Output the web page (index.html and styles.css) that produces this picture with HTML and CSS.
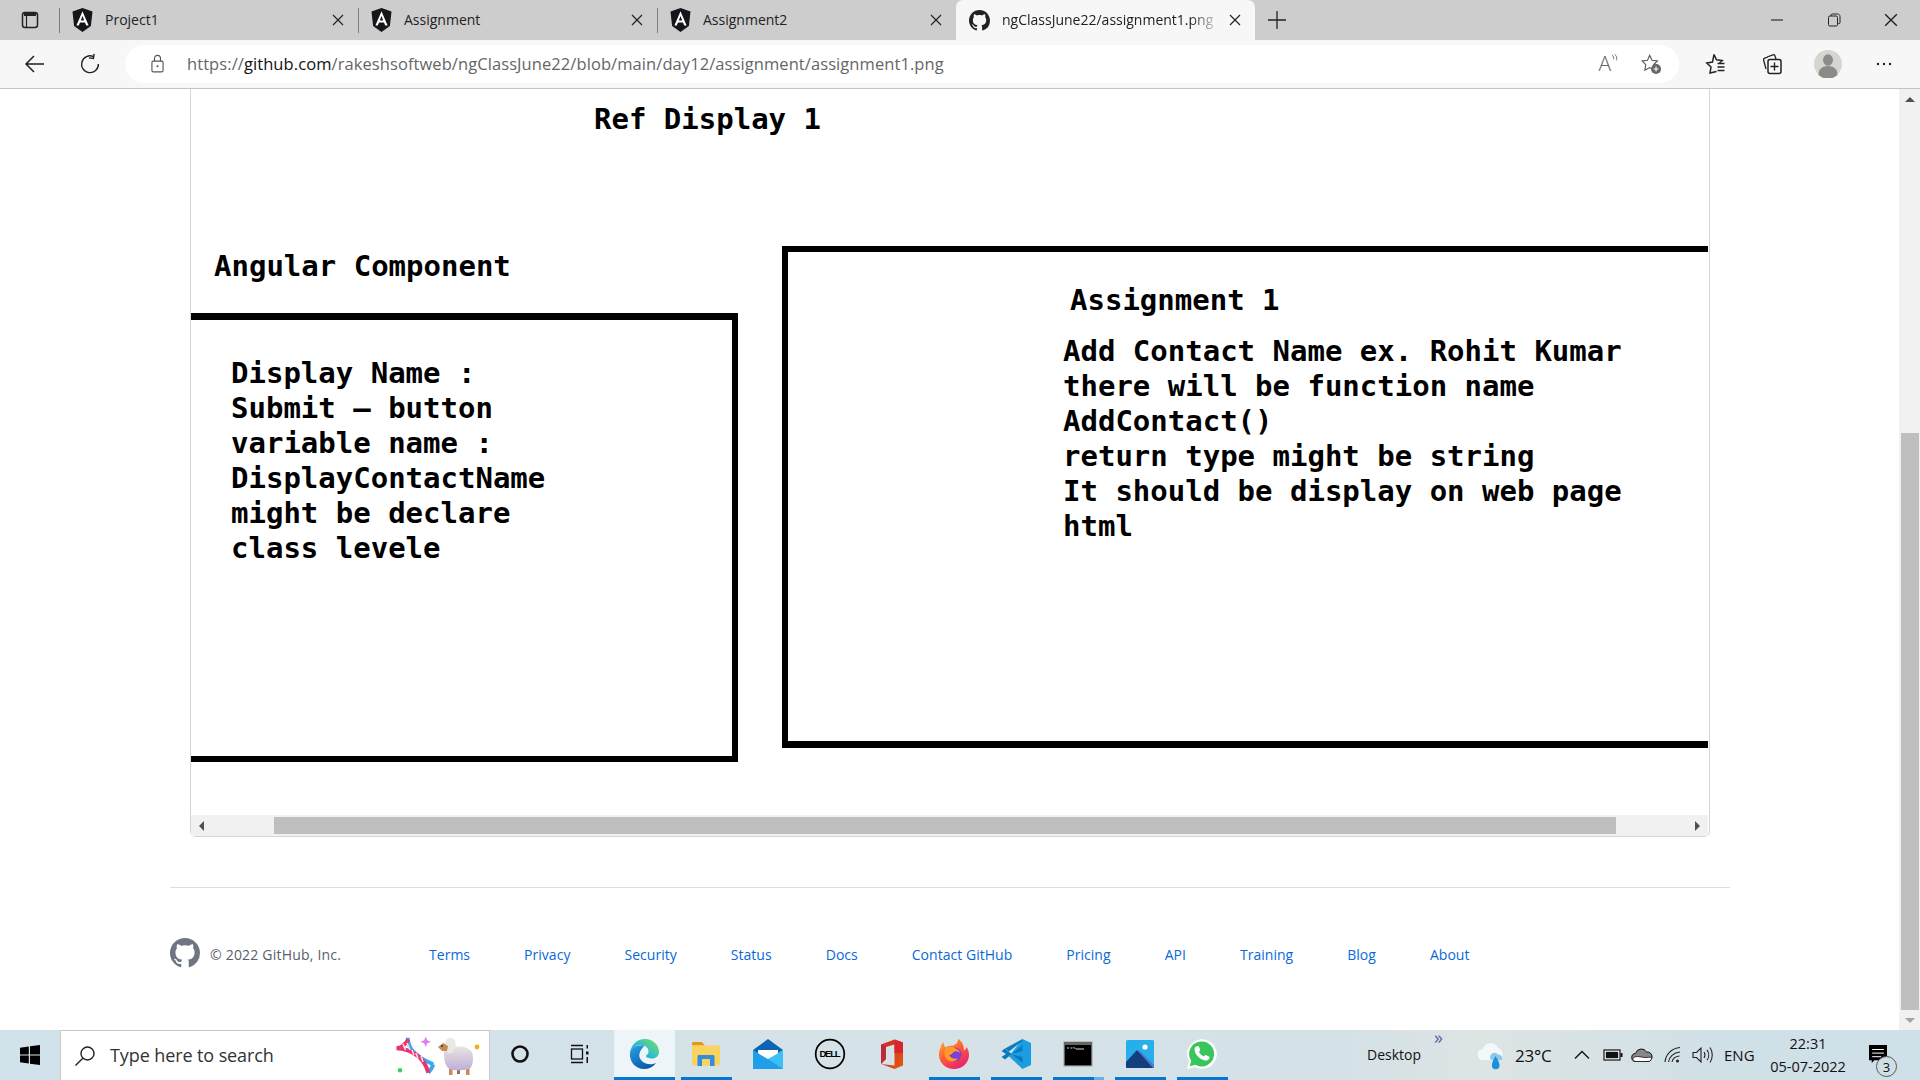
FILE: index.html
```html
<!DOCTYPE html>
<html lang="en">
<head>
<meta charset="utf-8">
<title>ngClassJune22/assignment1.png</title>
<link rel="stylesheet" href="styles.css">
</head>
<body>
<svg class="defs" width="0" height="0" aria-hidden="true">
  <defs>
    <symbol id="angular" viewBox="0 0 20 24">
      <path fill="#15161a" d="M10 0 20 3.6 18.4 18 10 24 1.6 18 0 3.6Z"/>
      <path fill="#fff" fill-rule="evenodd" d="M10 3.2 3.9 17.6h2.4l1.2-3.2h5l1.2 3.2h2.4ZM8.3 12.4 10 8l1.7 4.4Z"/>
    </symbol>
    <symbol id="octo" viewBox="0 0 16 16">
      <path d="M8 0C3.58 0 0 3.58 0 8c0 3.54 2.29 6.53 5.47 7.59.4.07.55-.17.55-.38 0-.19-.01-.82-.01-1.49-2.01.37-2.53-.49-2.69-.94-.09-.23-.48-.94-.82-1.13-.28-.15-.68-.52-.01-.53.63-.01 1.08.58 1.23.82.72 1.21 1.87.87 2.33.66.07-.52.28-.87.51-1.07-1.78-.2-3.64-.89-3.64-3.95 0-.87.31-1.59.82-2.15-.08-.2-.36-1.02.08-2.12 0 0 .67-.21 2.2.82.64-.18 1.32-.27 2-.27.68 0 1.36.09 2 .27 1.53-1.04 2.2-.82 2.2-.82.44 1.1.16 1.92.08 2.12.51.56.82 1.27.82 2.15 0 3.07-1.87 3.75-3.65 3.95.29.25.54.73.54 1.48 0 1.07-.01 1.93-.01 2.2 0 .21.15.46.55.38A8.013 8.013 0 0016 8c0-4.42-3.58-8-8-8z"/>
    </symbol>
    <symbol id="cross" viewBox="0 0 12 12">
      <path d="M1 1l10 10M11 1 1 11" fill="none" stroke="currentColor" stroke-width="1.2"/>
    </symbol>
    <linearGradient id="edgeTop" x1="0" y1="1" x2="1" y2="0.2">
      <stop offset="0" stop-color="#1b8fd8"/><stop offset=".55" stop-color="#33c0c8"/><stop offset="1" stop-color="#6fdc6a"/>
    </linearGradient>
    <linearGradient id="edgeLow" x1="0" y1="0" x2="0.6" y2="1">
      <stop offset="0" stop-color="#2aa3e4"/><stop offset="1" stop-color="#0b5aa8"/>
    </linearGradient>
    <linearGradient id="ffBody" x1="0" y1="0" x2="0.6" y2="1">
      <stop offset="0" stop-color="#ffb02e"/><stop offset=".55" stop-color="#ff5a36"/><stop offset="1" stop-color="#e8246f"/>
    </linearGradient>
    <linearGradient id="officeG" x1="0" y1="0" x2="1" y2="1">
      <stop offset="0" stop-color="#c52a2a"/><stop offset="1" stop-color="#e8590c"/>
    </linearGradient>
    <linearGradient id="sheepG" x1="0" y1="0" x2="0" y2="1">
      <stop offset="0" stop-color="#e8e4e2"/><stop offset="1" stop-color="#bfaed8"/>
    </linearGradient>
  </defs>
</svg>

<div class="browser">
  <header class="tabstrip">
    <div class="sidebtn">
      <svg class="i18" viewBox="0 0 18 18"><rect x="1.5" y="1.5" width="15" height="15" rx="2.5" fill="none" stroke="#222" stroke-width="1.5"/><path d="M3 2h12v3H3Z" fill="#222"/><path d="M5.5 5v11" stroke="#222" stroke-width="1.2"/></svg>
    </div>
    <div class="tab">
      <svg class="favicon"><use href="#angular"/></svg>
      <span class="tabtitle">Project1</span>
      <svg class="tabclose"><use href="#cross"/></svg>
    </div>
    <div class="tab">
      <svg class="favicon"><use href="#angular"/></svg>
      <span class="tabtitle">Assignment</span>
      <svg class="tabclose"><use href="#cross"/></svg>
    </div>
    <div class="tab">
      <svg class="favicon"><use href="#angular"/></svg>
      <span class="tabtitle">Assignment2</span>
      <svg class="tabclose"><use href="#cross"/></svg>
    </div>
    <div class="tab tab-active">
      <svg class="favicon favicon-gh"><use href="#octo"/></svg>
      <span class="tabtitle tabtitle-fade">ngClassJune22/assignment1.png</span>
      <svg class="tabclose"><use href="#cross"/></svg>
    </div>
    <div class="newtab">
      <svg class="i18" viewBox="0 0 18 18"><path d="M9 0v18M0 9h18" stroke="#222" stroke-width="1.3" fill="none"/></svg>
    </div>
    <div class="winctrls">
      <div class="winbtn"><svg class="i14" viewBox="0 0 14 14"><path d="M1 7h12" stroke="#222" stroke-width="1.1"/></svg></div>
      <div class="winbtn"><svg class="i14" viewBox="0 0 14 14"><rect x="1.5" y="3" width="9" height="10" rx="1.5" fill="none" stroke="#222"/><path d="M4 3V2.2C4 1.5 4.5 1 5.2 1h5.3C11.9 1 13 2.1 13 3.5v6c0 .7-.5 1.2-1.2 1.2h-1.3" fill="none" stroke="#222"/></svg></div>
      <div class="winbtn"><svg class="i14"><use href="#cross"/></svg></div>
    </div>
  </header>

  <nav class="toolbar">
    <div class="navbtn navbtn-back">
      <svg class="i22" viewBox="0 0 22 22"><path d="M20 11H2.500M10 3l-8 8 8 8" fill="none" stroke="#222" stroke-width="1.500"/></svg>
    </div>
    <div class="navbtn navbtn-reload">
      <svg class="i22" viewBox="0 0 22 22"><path d="M14.500 3.600A8.400 8.400 0 1 0 19.400 11" fill="none" stroke="#222" stroke-width="1.400"/><path d="M14.800 0.800v4.600h-4.600" fill="none" stroke="#222" stroke-width="1.400" transform="rotate(8 14 3)"/></svg>
    </div>
    <div class="addressbar">
      <svg class="lock" viewBox="0 0 14 20"><rect x="1" y="7.500" width="12" height="11.500" rx="1.500" fill="none" stroke="#555" stroke-width="1.200"/><path d="M3.800 7.500V4.400a3.200 3.200 0 0 1 6.400 0v3.100" fill="none" stroke="#555" stroke-width="1.200"/><circle cx="7" cy="13" r="1.100" fill="#555"/></svg>
      <span class="url">https://<b class="url-host">github.com</b>/rakeshsoftweb/ngClassJune22/blob/main/day12/assignment/assignment1.png</span>
      <span class="readaloud">A<svg class="waves" viewBox="0 0 8 12"><path d="M1 1.500c2 1.200 2.400 3 2 5M4 .5c2.600 1.800 3 4.500 2.200 7" fill="none" stroke="#555" stroke-width=".9"/></svg></span>
      <svg class="favadd" viewBox="0 0 24 24"><path d="M10.500 2.500l2.600 5.400 5.900.8-4.300 4.100 1 5.900-5.200-2.800-5.200 2.800 1-5.900L2.300 8.700l5.900-.8Z" fill="none" stroke="#555" stroke-width="1.200"/><circle cx="17.500" cy="17.500" r="5.500" fill="#666"/><path d="M17.500 14.800v5.400M14.800 17.500h5.400" stroke="#fff" stroke-width="1.200"/></svg>
    </div>
    <div class="toolslot">
      <svg class="i24" viewBox="0 0 24 24"><path d="M10 2.500l2.500 5.200 5.700.8-2.600 2.500M12.500 19.500 6 21l1-6-4.200-4 5.700-.9L10 2.500" fill="none" stroke="#222" stroke-width="1.500"/><path d="M13.500 11.500h7M13.500 15h7M13.500 18.500h7" stroke="#222" stroke-width="1.500"/></svg>
    </div>
    <div class="toolslot">
      <svg class="i24" viewBox="0 0 24 24"><path d="M7 5 13 2.800c.8-.3 1.500 0 1.800.8L16 7M6 17 3.600 8c-.2-.8.200-1.500 1-1.800L8 5" fill="none" stroke="#222" stroke-width="1.300"/><rect x="8" y="7.500" width="13" height="14" rx="2" fill="none" stroke="#222" stroke-width="1.500"/><path d="M14.500 10.500v8M10.500 14.500h8" stroke="#222" stroke-width="1.400"/></svg>
    </div>
    <div class="toolslot">
      <svg class="avatar" viewBox="0 0 28 28"><circle cx="14" cy="14" r="14" fill="#d6d5d0"/><ellipse cx="14" cy="10" rx="5" ry="5.800" fill="#8b8b88"/><path d="M4.500 25c0-6 4-9 9.500-9s9.500 3 9.500 9a14 14 0 0 1-19 0Z" fill="#8b8b88"/></svg>
    </div>
    <div class="toolslot">
      <svg class="i18" viewBox="0 0 18 18"><circle cx="3" cy="9" r="1.200" fill="#222"/><circle cx="9" cy="9" r="1.200" fill="#222"/><circle cx="15" cy="9" r="1.200" fill="#222"/></svg>
    </div>
  </nav>

  <main class="viewport">
    <div class="page">
      <section class="card">
        <div class="picture">
          <h1 class="pic-heading">Ref Display 1</h1>
          <div class="pic-row">
            <div class="pic-left">
              <h2 class="pic-label">Angular Component</h2>
              <div class="box box-left">
                <p class="pic-text">Display Name :<br>Submit – button<br>variable name :<br>DisplayContactName<br>might be declare<br>class levele</p>
              </div>
            </div>
            <div class="box box-right">
              <h2 class="box-title">Assignment 1</h2>
              <p class="pic-text">Add Contact Name ex. Rohit Kumar<br>there will be function name<br>AddContact()<br>return type might be string<br>It should be display on web page<br>html</p>
            </div>
          </div>
        </div>
        <div class="hscroll">
          <div class="hs-start"><span class="arrow-left"></span></div>
          <div class="hs-thumb"></div>
          <div class="hs-end"><span class="arrow-right"></span></div>
        </div>
      </section>

      <footer class="footer">
        <svg class="ghmark"><use href="#octo"/></svg>
        <span class="copyright">© 2022 GitHub, Inc.</span>
        <ul class="footlinks">
          <li><a href="#">Terms</a></li>
          <li><a href="#">Privacy</a></li>
          <li><a href="#">Security</a></li>
          <li><a href="#">Status</a></li>
          <li><a href="#">Docs</a></li>
          <li><a href="#">Contact GitHub</a></li>
          <li><a href="#">Pricing</a></li>
          <li><a href="#">API</a></li>
          <li><a href="#">Training</a></li>
          <li><a href="#">Blog</a></li>
          <li><a href="#">About</a></li>
        </ul>
      </footer>
    </div>
    <aside class="vscroll">
      <div class="vs-top"><span class="arrow-up"></span></div>
      <div class="vs-space"></div>
      <div class="vs-thumb"></div>
      <div class="vs-bottom"><span class="arrow-down"></span></div>
    </aside>
  </main>

  <footer class="taskbar">
    <div class="startbtn">
      <svg class="i20" viewBox="0 0 20 20"><path fill="#000" d="M0 2.800 8.800 1.500v8H0ZM10 1.300 20 0v9.500H10ZM0 10.500h8.800v8L0 17.200ZM10 10.500h10V20l-10-1.300Z"/></svg>
    </div>
    <div class="searchbox">
      <svg class="i22" viewBox="0 0 22 22"><circle cx="13.500" cy="8.500" r="6.500" fill="none" stroke="#222" stroke-width="1.400"/><path d="M8.800 13.200 1.500 20.500" stroke="#222" stroke-width="1.400"/></svg>
      <span class="searchtext">Type here to search</span>
      <svg class="doodle" viewBox="0 0 90 40">
        <circle cx="10" cy="34.300" r="2.300" fill="#3ecf6b"/>
        <path d="M35.700 0.500l1.500 3.700 3.700 1.500-3.700 1.500-1.500 3.700-1.500-3.700-3.700-1.500 3.700-1.500Z" fill="#dd7cf0"/>
        <path d="M17.700 1.700C18 12 24 20 43.300 28.300" fill="none" stroke="#38a9ee" stroke-width="4"/>
        <path d="M43.300 28.300C42 32 40 35 38.300 36.700" fill="none" stroke="#38a9ee" stroke-width="4"/>
        <path d="M6.700 12.300C11 12 16 8 18.300 3.300" fill="none" stroke="#e8336d" stroke-width="4"/>
        <path d="M6.700 12.300C20 13 34 20 38.300 36.700" fill="none" stroke="#e8336d" stroke-width="4"/>
        <path d="M13 8l2.500 6M17 7l3 7M22 14l2 5M26 17l2 6M31 20l2 6" stroke="#f6dfe8" stroke-width="1.600"/>
        <circle cx="87" cy="11" r="2.400" fill="#fba81c"/>
        <g transform="translate(6 0)">
          <rect x="53" y="30" width="3.500" height="9" fill="#c98a5a"/>
          <rect x="70" y="30" width="3.500" height="9" fill="#c98a5a"/>
          <rect x="61" y="30" width="3" height="8" fill="#9a6a45"/>
          <path d="M48 16C48 12 52 11 57 12 63 9 72 11 76 16 78 22 77 31 73 33 65 35 56 35 52 32 48 27 48 21 48 16Z" fill="url(#sheepG)"/>
          <path d="M48 9C50 0 57 0 59 5 61 9 59 13 56 17 52 18 48 15 48 9Z" fill="#ece8e2"/>
          <path d="M42 11 47 7 52 10 51 15 46 15Z" fill="#c88a55"/>
          <circle cx="46" cy="10" r="1" fill="#333"/>
        </g>
      </svg>
    </div>
    <div class="appslot slot-cortana">
      <svg class="i20" viewBox="0 0 20 20"><circle cx="10" cy="10" r="7.500" fill="none" stroke="#111" stroke-width="2.600"/></svg>
    </div>
    <div class="appslot slot-taskview">
      <svg class="i22" viewBox="0 0 22 22"><path d="M2 2.500h12M2 19.500h12" stroke="#111" stroke-width="1.300"/><rect x="2.500" y="6" width="11" height="10" fill="none" stroke="#111" stroke-width="1.300"/><rect x="17.500" y="2" width="1.500" height="3.500" fill="#111"/><rect x="17" y="8.500" width="2.500" height="3" fill="#111"/><rect x="17.500" y="14" width="1.500" height="6" fill="#111"/></svg>
    </div>
    <div class="appslot app-active">
      <svg class="appicon" viewBox="0 0 32 32">
        <path d="M2 15C3 7 9 1 17 1c8 0 14 6 14 13 0 4-3 6.500-7 6.500-3 0-6-1-6-2.500 0-1 2.500-1.500 2.500-4.500C20.500 9.500 17 7 13 7 7.500 7 3 11 2 15Z" fill="url(#edgeTop)"/>
        <path d="M2 15c-1 9 6 16 14 16 5 0 9-2 12-6-3 1.500-7 1.800-10 .5-5-2-7.500-6-6.500-10 .8-3.500 3.500-6 5-8C9.500 6.500 3 9.500 2 15Z" fill="url(#edgeLow)"/>
      </svg>
    </div>
    <div class="appslot app-open">
      <svg class="appicon" viewBox="0 0 32 32">
        <path d="M2 5.500C2 4.500 2.500 4 3.500 4H12l3 3.500H2Z" fill="#dd9a12"/>
        <rect x="2" y="7.500" width="28" height="20" rx="1" fill="#fad35f"/>
        <path d="M7.500 28V18.500c0-1 .5-1.500 1.500-1.500H23c1 0 1.500.5 1.500 1.500V28H20V21h-8v7Z" fill="#2f8fdc"/>
      </svg>
    </div>
    <div class="appslot">
      <svg class="appicon" viewBox="0 0 32 32">
        <path d="M1 12 16 1l15 11v4H1Z" fill="#0b64b4"/>
        <path d="M1 12 16 21 31 12V31H1Z" fill="#1f9fe8"/>
        <path d="M16 21l15-9v19Z" fill="#3cc0f5"/>
        <path d="M6 12H26v3.200L16 21 6 15.200Z" fill="#fff"/>
      </svg>
    </div>
    <div class="appslot">
      <svg class="appicon" viewBox="0 0 32 32">
        <circle cx="16" cy="16" r="14.300" fill="none" stroke="#000" stroke-width="1.700"/>
        <text class="delltext" x="16" y="19.300" text-anchor="middle" textLength="21">DELL</text>
      </svg>
    </div>
    <div class="appslot">
      <svg class="appicon" viewBox="0 0 32 32">
        <path d="M5 6.500 18.500 1.500 27 4.500V27.500L18.500 31 5 26 18.500 27.500V6.500L10 9V21L5 26Z" fill="url(#officeG)"/>
        <path d="M5 26V6.500l5 2.500V21Z" fill="#b8244c" opacity=".7"/>
        <path d="M18.500 1.500 27 4.500V15H18.500Z" fill="#d9262c"/>
      </svg>
    </div>
    <div class="appslot app-open">
      <svg class="appicon" viewBox="0 0 32 32">
        <path d="M3 9C1 12 1 15 1 17c0 8 7 14 15 14s15-6 15-14c0-3-.8-6-2.500-8-.5 2-1.500 3-2.500 3.500C26 8 24 3 20 .8c.5 4-2.500 5.500-5 7C12 7.500 9 8 7.500 9.500 6.500 8.500 5.500 6 5.500 4 4 5.500 3 7 3 9Z" fill="url(#ffBody)"/>
        <circle cx="16.500" cy="16.500" r="7" fill="#7d3fd6"/>
        <path d="M7 11c3-3 9-3 11 0 2 0 4 2 4 5 0-2-3-3-5.500-2.500C14 15 14 17 11 17c1.500 3 5 4.500 9 3.500-3 4-9 4-12 0-2-3-2-7-1-9.500Z" fill="#ff9a2b"/>
      </svg>
    </div>
    <div class="appslot app-open">
      <svg class="appicon" viewBox="0 0 32 32">
        <path d="M22.500 1 31 5V27L22.500 31 9 18.500Z" fill="#1b9de2"/>
        <path d="M5 10.500 1.500 13 6 16 1.500 19 5 21.500 22.500 7v6L10.500 16l12 3v6Z" fill="#0b78bd"/>
        <path d="M22.500 1 5 10.500 9 13.500 22.500 3Z" fill="#0a7cc4"/>
      </svg>
    </div>
    <div class="appslot app-open app-multi">
      <svg class="appicon" viewBox="0 0 32 32">
        <rect x="2" y="4" width="28" height="24" fill="#000" stroke="#a7a7a7" stroke-width="1.200"/>
        <rect x="2" y="4" width="28" height="3" fill="#666"/>
        <path d="M5 10h2M8.500 10h2M11.500 9l2 2M14 11h8" stroke="#ddd" stroke-width="1"/>
      </svg>
    </div>
    <div class="appslot app-open">
      <svg class="appicon" viewBox="0 0 32 32">
        <rect x="2" y="2" width="28" height="28" rx="1.500" fill="#27afec"/>
        <circle cx="21" cy="9" r="2.600" fill="#fff"/>
        <path d="M15 12l15 15v3H15Z" fill="#4f78d0"/>
        <path d="M2 24 13 12l16 18H3.500C2.500 30 2 29.500 2 28.500Z" fill="#133f7d"/>
      </svg>
    </div>
    <div class="appslot app-open">
      <svg class="appicon" viewBox="0 0 32 32">
        <path d="M1 31 3 23.200A14.800 14.800 0 1 1 8.800 29Z" fill="#fff"/>
        <path d="M3.800 28.200 5.200 22.800A12.500 12.500 0 1 1 9.500 26.800Z" fill="#38c65c"/>
        <path d="M11 8.500c.6-.6 1.700-.6 2 .2l1.100 2.800c.2.500 0 1-.4 1.400l-.8.900c1 2 2.700 3.700 4.900 4.800l1-1.100c.4-.4.900-.500 1.400-.3l2.700 1.300c.7.300.8 1.200.4 1.900-.8 1.700-3 2.400-5 1.800-5.200-1.500-9-5.600-9.700-10.300-.2-1.300.4-2.600 1.400-3.400Z" fill="#fff"/>
      </svg>
    </div>

    <div class="tray">
      <div class="tray-desktop">
        <span>Desktop</span>
        <span class="chevrons">»</span>
      </div>
      <svg class="weather" viewBox="0 0 28 30">
        <path d="M6 20a5.500 5.500 0 0 1 0-11 8 8 0 0 1 15-1 6.500 6.500 0 0 1 1 12Z" fill="#f3f8fc"/>
        <path d="M14 20a4 4 0 0 1 7-5.500A4 4 0 0 1 25 20Z" fill="#8cc8ee"/>
        <path d="M18.500 16c3 5 4 7 4 9.500a3.800 3.800 0 0 1-7.600 0c0-2.500 1-4.500 3.600-9.500Z" fill="#1a8fdc"/>
      </svg>
      <span class="tray-temp">23°C</span>
      <svg class="tray-caret" viewBox="0 0 16 16"><path d="M1 11.500 8 4.500l7 7" fill="none" stroke="#111" stroke-width="1.300"/></svg>
      <svg class="tray-battery" viewBox="0 0 20 16"><rect x="1" y="3" width="16" height="10" fill="#fff" stroke="#111" stroke-width="1.200"/><rect x="2.800" y="4.800" width="12.400" height="6.400" fill="#111"/><rect x="17.500" y="6" width="2" height="4" fill="#111"/></svg>
      <svg class="tray-cloud" viewBox="0 0 22 16"><path d="M5 14.500a4 4 0 0 1-.5-8 6 6 0 0 1 11-1.500 4.800 4.800 0 0 1 1.500 9.500Z" fill="#888" stroke="#111" stroke-width="1"/><path d="M1.500 12c1-1.500 2.500-2.500 5-2.500 3 0 5 1 7.500 1s4-.500 6.500-.2c.5 2-.8 4.200-3.500 4.200H5c-1.500 0-2.800-1-3.500-2.500Z" fill="#fff" stroke="#111" stroke-width=".8"/></svg>
      <svg class="tray-wifi" viewBox="0 0 18 18"><path d="M1 16C1.500 8.500 8 2 16 1.500M4.500 16c.5-5 5-9.500 11.500-10M8 16c.5-3 3-5.500 7.500-6" fill="none" stroke="#222" stroke-width="1.100"/><circle cx="13.500" cy="15" r="1.500" fill="#222"/></svg>
      <svg class="tray-speaker" viewBox="0 0 22 18"><path d="M2 6.500h3.500L10 2v14L5.500 11.500H2Z" fill="none" stroke="#222" stroke-width="1.100"/><path d="M13 6c1.200 1.800 1.200 4.200 0 6M16 3.800c2.200 3 2.200 7.400 0 10.400M19 1.500c3 4.300 3 10.700 0 15" fill="none" stroke="#222" stroke-width="1.100"/></svg>
      <span class="tray-lang">ENG</span>
      <div class="tray-clock"><span>22:31</span><span>05-07-2022</span></div>
      <div class="tray-notify">
        <svg class="notify-icon" viewBox="0 0 20 20"><path d="M0 0h20v17H6l-3 3v-3H0Z" fill="#000"/><path d="M3.500 5h13M3.500 9h13M3.500 13h10" stroke="#fff" stroke-width="1.100"/></svg>
        <span class="notify-badge">3</span>
      </div>
    </div>
  </footer>
</div>
</body>
</html>
```

FILE: styles.css
```css
* { box-sizing: border-box; }
html, body { margin: 0; height: 100%; overflow: hidden; background: #fff; }
body { font-family: "Open Sans", "Noto Sans", sans-serif; color: #222; }
.defs { position: absolute; }
svg { display: block; flex: none; }
.i14 { width: 14px; height: 14px; color: #222; }
.i18 { width: 18px; height: 18px; }
.i20 { width: 20px; height: 20px; }
.i22 { width: 22px; height: 22px; }
.i24 { width: 24px; height: 24px; }

.browser { display: flex; flex-direction: column; height: 1080px; width: 1920px; }

/* tab strip */
.tabstrip { display: flex; height: 40px; background: #cdcdcd; flex: none; padding-right: 1px; }
.sidebtn { width: 59px; display: flex; align-items: center; justify-content: center; }
.tab { width: 299px; height: 40px; display: flex; align-items: center; padding-left: 13px; position: relative; font-size: 14px; color: #222; }
.tab::before { content: ""; position: absolute; left: 0; top: 8px; bottom: 7px; width: 1px; background: #7f7f7f; }
.tab-active { width: 299px; background: #f7f7f7; padding-left: 13px; border-radius: 7px 7px 0 0; }
.tab-active::before { display: none; }
.favicon { width: 21px; height: 24px; }
.favicon-gh { width: 21px; height: 21px; fill: #222; }
.tabtitle { margin-left: 12px; flex: 1; white-space: nowrap; overflow: hidden; padding-bottom: 2px; }
.tabtitle-fade { -webkit-mask-image: linear-gradient(90deg, #000 86%, transparent); mask-image: linear-gradient(90deg, #000 86%, transparent); }
.tabclose { width: 12px; height: 12px; margin-right: 14px; margin-left: 8px; color: #222; }
.newtab { width: 44px; display: flex; align-items: center; justify-content: center; }
.winctrls { display: flex; margin-left: auto; }
.winbtn { width: 57px; height: 40px; display: flex; align-items: center; justify-content: center; }

/* toolbar */
.toolbar { height: 49px; flex: none; display: flex; align-items: center; background: #f7f7f7; border-bottom: 1px solid #c4c4c4; padding: 0 8px 1px 12px; }
.navbtn { width: 46px; height: 38px; display: flex; align-items: center; justify-content: center; }
.navbtn-reload { margin-left: 9px; margin-right: 12px; }
.addressbar { width: 1554px; height: 38px; background: #fff; border-radius: 19px; display: flex; align-items: center; padding-left: 26px; margin-right: 9px; }
.lock { width: 13px; height: 19px; }
.url { margin-left: 23px; font-size: 16.5px; color: #666; white-space: nowrap; letter-spacing: 0.08px; }
.url-host { font-weight: 400; color: #111; }
.readaloud { margin-left: auto; font-size: 21px; line-height: 1; font-weight: 300; color: #666; display: flex; align-items: flex-start; }
.waves { width: 7px; height: 12px; }
.favadd { width: 22px; height: 22px; margin-left: 22px; margin-right: 17px; }
.toolslot { width: 56px; height: 38px; display: flex; align-items: center; justify-content: center; }
.avatar { width: 28px; height: 28px; }

/* main */
.viewport { flex: 1; display: flex; min-height: 0; background: #fff; }
.page { width: 1560px; margin-left: 170px; margin-right: 169px; }
.card { margin: 0 20px; width: 1520px; border: 1px solid #d0d7de; border-top: 0; border-radius: 0 0 6px 6px; padding-right: 1px; }
.picture { height: 726px; overflow: hidden; background: #fff; padding-top: 13px; font-family: "DejaVu Sans Mono", monospace; font-weight: 700; font-size: 29px; line-height: 35px; color: #000; }
.pic-heading { margin: 0 0 109px 403px; font: inherit; }
.pic-row { display: flex; gap: 44px; }
.pic-left { width: 547px; flex: none; padding-top: 3px; }
.pic-label { margin: 0 0 29px 23px; font: inherit; }
.box { border: 6px solid #000; }
.box-left { height: 449px; border-left: 0; border-top-width: 7px; padding: 36px 0 0 40px; }
.box-right { flex: 1; height: 502px; border-right: 0; border-bottom-width: 7px; padding: 31px 0 0 275px; }
.box-title { margin: 0 0 16px 7px; font: inherit; }
.pic-text { margin: 0; white-space: nowrap; }

.hscroll { height: 21px; background: #f1f1f1; display: flex; padding: 2px 0; }
.hs-start { width: 83px; display: flex; align-items: center; padding-left: 8px; }
.hs-thumb { width: 1342px; background: #bfbfbf; }
.hs-end { flex: 1; display: flex; align-items: center; justify-content: flex-end; padding-right: 8px; }
.arrow-left { border: 5px solid transparent; border-right: 5px solid #505050; border-left: 0; }
.arrow-right { border: 5px solid transparent; border-left: 5px solid #505050; border-right: 0; }

.footer { margin-top: 50px; border-top: 1px solid #d8dee4; padding-top: 50px; display: flex; align-items: center; font-size: 14px; }
.ghmark { width: 30px; height: 30px; fill: #6e7781; }
.copyright { margin-left: 10px; color: #57606a; letter-spacing: 0.2px; width: 219px; white-space: nowrap; padding-top: 2px; }
.footlinks { list-style: none; margin: 0; padding: 2px 0 0; display: flex; gap: 54px; }
.footlinks a { color: #0969da; text-decoration: none; letter-spacing: 0.03px; white-space: nowrap; }

.vscroll { width: 21px; background: #f1f1f1; display: flex; flex-direction: column; padding: 0 1px 0 2px; }
.vs-top { height: 21px; display: flex; align-items: center; justify-content: center; }
.vs-space { height: 323px; }
.vs-thumb { flex: 1; background: #bfbfbf; }
.vs-bottom { height: 20px; display: flex; align-items: center; justify-content: center; }
.arrow-up { border: 5px solid transparent; border-bottom: 5px solid #505050; border-top: 0; }
.arrow-down { border: 5px solid transparent; border-top: 5px solid #a3a3a3; border-bottom: 0; }

/* taskbar */
.taskbar { height: 50px; flex: none; display: flex; align-items: stretch; background: linear-gradient(90deg, #d2e2ea 0, #d5e3e8 45%, #d4e1e6 70%, #dde4e4 77%, #d0e0e7 90%, #cfe0e8 100%); font-size: 15px; color: #111; }
.startbtn { width: 60px; display: flex; align-items: center; justify-content: center; }
.searchbox { width: 430px; background: #fff; border: 1px solid #c9c9c9; border-bottom: 0; display: flex; align-items: center; padding-left: 13px; }
.searchtext { margin-left: 14px; font-size: 18px; color: #333; white-space: nowrap; letter-spacing: -0.1px; padding-bottom: 2px; }
.doodle { width: 90px; height: 40px; margin-left: auto; margin-right: 9px; }
.appslot { width: 62px; display: flex; align-items: center; justify-content: center; position: relative; padding-bottom: 2px; }
.slot-cortana { width: 60px; }
.slot-taskview { width: 64px; padding-right: 4px; }
.appicon { width: 32px; height: 32px; }
.app-active { background: #eef5f8; width: 61px; padding-right: 2px; }
.app-active::after, .app-open::after { content: ""; position: absolute; bottom: 0; height: 3px; background: #0078d4; }
.app-active::after { left: 0; right: 0; }
.app-open::after { left: 6px; right: 5px; }
.app-multi::after { background: linear-gradient(90deg, #0078d4 80%, #6aaee6 80%); }
.delltext { font-family: "Liberation Sans", sans-serif; font-weight: 700; font-size: 9.5px; fill: #000; }

.tray { margin-left: 134px; flex: 1; display: flex; align-items: center; font-size: 14px; }
.tray-desktop { width: 99px; position: relative; padding-bottom: 1px; }
.chevrons { position: absolute; left: 67px; top: -17px; color: #5f5fa8; font-size: 18px; line-height: 1; }
.weather { width: 28px; height: 30px; margin-left: 11px; }
.tray-temp { font-size: 17px; margin-left: 10px; white-space: nowrap; letter-spacing: -0.2px; width: 52px; }
.tray-caret { width: 16px; height: 16px; margin-left: 7px; }
.tray-battery { width: 20px; height: 16px; margin-left: 13px; }
.tray-cloud { width: 22px; height: 16px; margin-left: 8px; }
.tray-wifi { width: 18px; height: 18px; margin-left: 11px; }
.tray-speaker { width: 22px; height: 18px; margin-left: 9px; }
.tray-lang { margin-left: 11px; font-size: 15px; width: 37px; }
.tray-clock { width: 90px; margin-left: 2px; display: flex; flex-direction: column; align-items: center; font-size: 14.5px; line-height: 23px; padding-bottom: 1px; }
.tray-notify { position: relative; width: 30px; height: 50px; margin-left: 15px; padding-top: 15px; }
.notify-icon { width: 20px; height: 18px; }
.notify-badge { position: absolute; left: 8px; top: 26px; width: 21px; height: 21px; border-radius: 50%; background: #cfdfe6; border: 1px solid #555; display: flex; align-items: center; justify-content: center; font-size: 13px; color: #111; }
```
